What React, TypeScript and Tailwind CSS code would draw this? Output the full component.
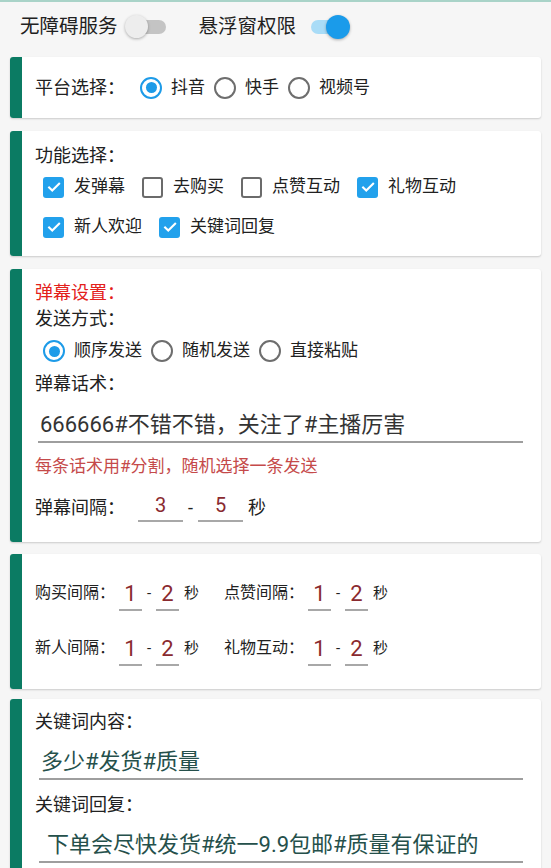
import React from "react";

function Radio({ checked }: { checked?: boolean }) {
  return checked ? (
    <span className="w-[22px] h-[22px] rounded-full border-[2.5px] border-[#1d9be8] flex items-center justify-center shrink-0">
      <span className="w-[11px] h-[11px] rounded-full bg-[#1d9be8]" />
    </span>
  ) : (
    <span className="w-[22px] h-[22px] rounded-full border-[2.5px] border-[#6e6e6e] shrink-0" />
  );
}

function Check({ checked }: { checked?: boolean }) {
  return checked ? (
    <span className="w-[21px] h-[21px] rounded-[3px] bg-[#22a1ec] flex items-center justify-center shrink-0">
      <svg viewBox="0 0 24 24" className="w-[18px] h-[18px]">
        <path d="M5.5 12.5l4.2 4.2L18.8 7.6" fill="none" stroke="white" strokeWidth="2.8" strokeLinecap="square" />
      </svg>
    </span>
  ) : (
    <span className="w-[21px] h-[21px] rounded-[3px] border-2 border-[#6b6b6b] shrink-0" />
  );
}

function Card({ children, className }: { children: React.ReactNode; className?: string }) {
  return (
    <div className={"mx-[10px] bg-white rounded-[3px] flex overflow-hidden shadow-[0_1px_2px_rgba(0,0,0,0.18)] " + (className || "")}>
      <div className="w-[12px] shrink-0 bg-[#0b7b63]" />
      <div className="flex-1 pl-[13px] pr-[18px]">{children}</div>
    </div>
  );
}

function BigNum({ v }: { v: string }) {
  return (
    <div className="flex flex-col h-[36px] pt-[2px] w-[45px]">
      <div className="h-[28px] leading-[28px] text-center text-[20px] text-[#8a2a2f]">{v}</div>
      <div className="h-[2px] mt-[1px] bg-[#a8a8a8]" />
    </div>
  );
}

function SmallNum({ v }: { v: string }) {
  return (
    <div className="flex flex-col h-[44px] pt-[8px] w-[23px]">
      <div className="h-[30px] leading-[30px] text-center text-[22px] text-[#8a2a2f]">{v}</div>
      <div className="h-[2px] bg-[#a8a8a8]" />
    </div>
  );
}

function IntervalGroup({ label }: { label: string }) {
  return (
    <div className="flex items-center">
      <span className="w-[75px] text-[16px] text-[#212121] whitespace-nowrap">{label}</span>
      <div className="ml-[9px]">
        <SmallNum v="1" />
      </div>
      <span className="w-[14px] text-center text-[15px] text-[#212121]">-</span>
      <SmallNum v="2" />
      <span className="ml-[5px] text-[15px] text-[#212121]">秒</span>
    </div>
  );
}

export default function App() {
  return (
    <div className="w-[551px] min-h-[868px] bg-[#f6f6f6] font-[Roboto,'Noto_Sans_CJK_SC',sans-serif] text-[#212121] overflow-hidden">
      <div className="h-[2px] bg-[#a9d3c8]" />
      <div className="h-[50px] flex items-center pl-[20px]">
        <span className="text-[19.5px]">无障碍服务</span>
        <div className="relative w-[44px] h-[24px] ml-[5px]">
          <div className="absolute left-[7px] right-[1px] top-[5px] h-[14px] rounded-full bg-[#c4c4c4]" />
          <div className="absolute left-[2px] top-[0px] w-[23px] h-[23px] rounded-full bg-[#ededed] shadow-[0_1px_3px_rgba(0,0,0,0.3)]" />
        </div>
        <span className="text-[19.5px] ml-[32px]">悬浮窗权限</span>
        <div className="relative w-[46px] h-[24px] ml-[10px]">
          <div className="absolute left-[5px] right-[5px] top-[5px] h-[14px] rounded-full bg-[#a9dcf7]" />
          <div className="absolute left-[20px] top-[0px] w-[24px] h-[24px] rounded-full bg-[#1a9bea] shadow-[0_1px_3px_rgba(0,0,0,0.3)]" />
        </div>
      </div>

      <Card className="mt-[5px]">
        <div className="h-[61px] flex items-center">
          <span className="w-[90px] text-[18px] whitespace-nowrap">平台选择：</span>
          <div className="ml-[15px] flex items-center gap-[9px] text-[17px]">
            <Radio checked />
            <span>抖音</span>
            <Radio />
            <span>快手</span>
            <Radio />
            <span>视频号</span>
          </div>
        </div>
      </Card>

      <Card className="mt-[13px]">
        <div className="pt-[14px] pb-[9px]">
          <div className="h-[22px] leading-[22px] text-[18px]">功能选择：</div>
          <div className="h-[40px] flex items-center gap-[9px] text-[17px]">
            <div className="pl-[8px] flex items-center gap-[10px]">
              <Check checked />
              <span>发弹幕</span>
            </div>
            <div className="pl-[8px] flex items-center gap-[10px]">
              <Check />
              <span>去购买</span>
            </div>
            <div className="pl-[8px] flex items-center gap-[10px]">
              <Check />
              <span>点赞互动</span>
            </div>
            <div className="pl-[8px] flex items-center gap-[10px]">
              <Check checked />
              <span>礼物互动</span>
            </div>
          </div>
          <div className="h-[40px] flex items-center gap-[9px] text-[17px]">
            <div className="pl-[8px] flex items-center gap-[10px]">
              <Check checked />
              <span>新人欢迎</span>
            </div>
            <div className="pl-[8px] flex items-center gap-[10px]">
              <Check checked />
              <span>关键词回复</span>
            </div>
          </div>
        </div>
      </Card>

      <Card className="mt-[13px]">
        <div className="pt-[11px] pb-[17px]">
          <div className="h-[26px] leading-[26px] text-[18px] text-[#e3201b]">弹幕设置：</div>
          <div className="h-[26px] leading-[26px] text-[18px]">发送方式：</div>
          <div className="h-[38px] flex items-center gap-[9px] pl-[8px] text-[17px]">
            <Radio checked />
            <span>顺序发送</span>
            <Radio />
            <span>随机发送</span>
            <Radio />
            <span>直接粘贴</span>
          </div>
          <div className="h-[28px] leading-[28px] text-[18px]">弹幕话术：</div>
          <div className="mt-[13px] ml-[3px] pl-[2px] pb-[2px] border-b-2 border-[#9e9e9e] leading-[28px] text-[22px] text-[#333333] whitespace-nowrap">
            666666#不错不错，关注了#主播厉害
          </div>
          <div className="mt-[12px] h-[22px] leading-[22px] text-[17px] text-[#c54a4a] whitespace-nowrap">每条话术用#分割，随机选择一条发送</div>
          <div className="mt-[12px] h-[36px] flex items-center text-[18px]">
            <span className="w-[90px] whitespace-nowrap">弹幕间隔：</span>
            <div className="ml-[13px]">
              <BigNum v="3" />
            </div>
            <span className="w-[15px] text-center">-</span>
            <BigNum v="5" />
            <span className="ml-[5px]">秒</span>
          </div>
        </div>
      </Card>

      <Card className="mt-[12px]">
        <div className="pt-[17px] pb-[19px]">
          <div className="h-[44px] flex items-center">
            <IntervalGroup label="购买间隔：" />
            <div className="ml-[25px]">
              <IntervalGroup label="点赞间隔：" />
            </div>
          </div>
          <div className="mt-[11px] h-[44px] flex items-center">
            <IntervalGroup label="新人间隔：" />
            <div className="ml-[25px]">
              <IntervalGroup label="礼物互动：" />
            </div>
          </div>
        </div>
      </Card>

      <Card className="mt-[10px]">
        <div className="pt-[10px] pb-[20px]">
          <div className="h-[26px] leading-[26px] text-[18px]">关键词内容：</div>
          <div className="mt-[13px] ml-[4px] pl-[2px] pb-[2px] border-b-2 border-[#9e9e9e] leading-[28px] text-[22px] text-[#25504b] whitespace-nowrap">
            多少#发货#质量
          </div>
          <div className="mt-[12px] h-[26px] leading-[26px] text-[18px]">关键词回复：</div>
          <div className="mt-[13px] ml-[4px] pl-[8px] pb-[2px] border-b-2 border-[#9e9e9e] leading-[28px] text-[22px] text-[#25504b] whitespace-nowrap">
            下单会尽快发货#统一9.9包邮#质量有保证的
          </div>
        </div>
      </Card>
    </div>
  );
}
